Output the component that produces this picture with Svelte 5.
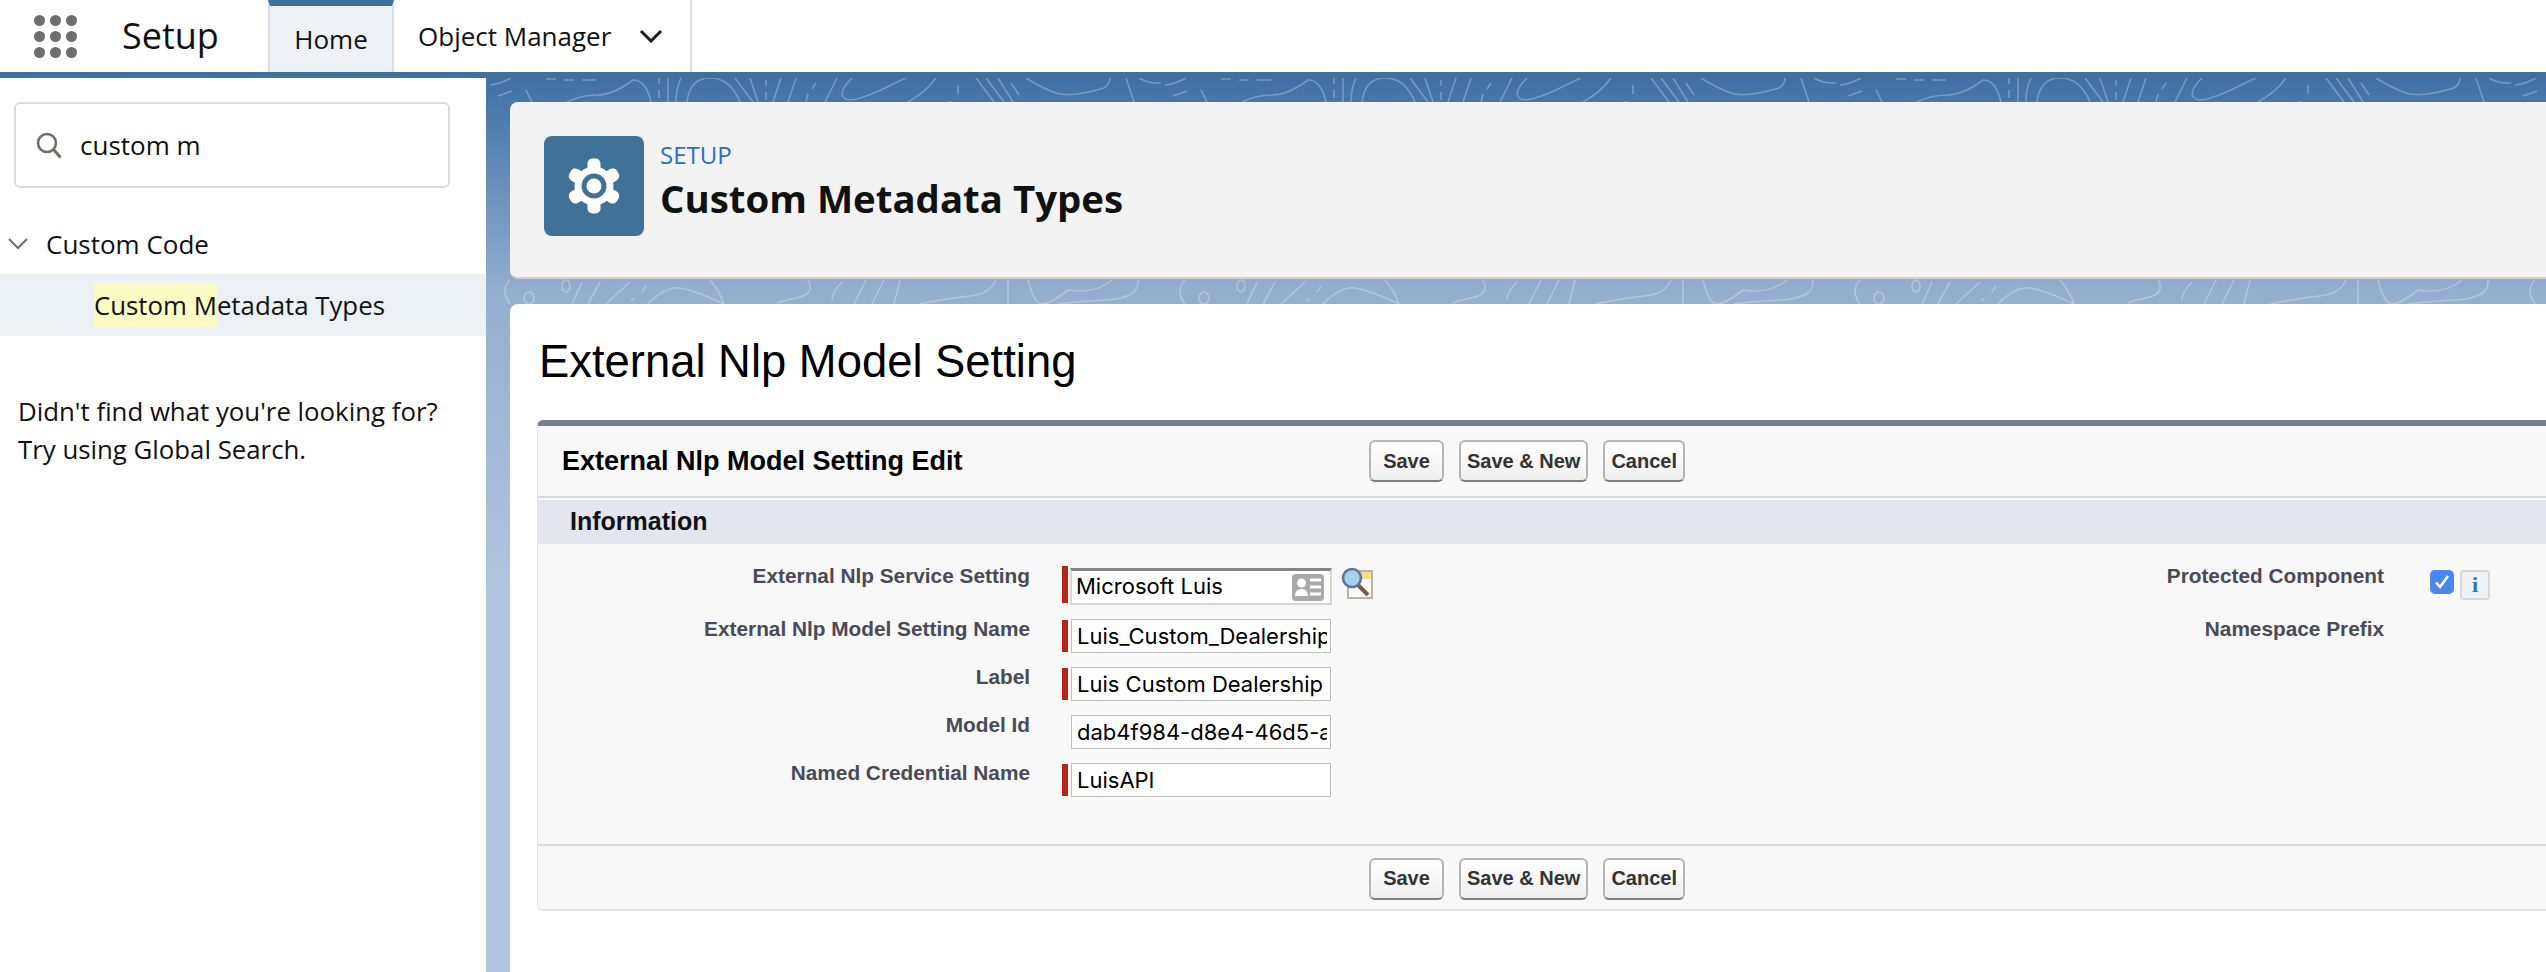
<script>
  const required = true;
  const fieldsLeft = [
    { label: 'External Nlp Service Setting', value: 'Microsoft Luis', required, lookup: true },
    { label: 'External Nlp Model Setting Name', value: 'Luis_Custom_Dealership', required },
    { label: 'Label', value: 'Luis Custom Dealership', required },
    { label: 'Model Id', value: 'dab4f984-d8e4-46d5-a' },
    { label: 'Named Credential Name', value: 'LuisAPI', required },
  ];
  const buttons = ['Save', 'Save & New', 'Cancel'];
  const teeth = [0, 60, 120, 180, 240, 300];
</script>

{#snippet actions()}
  <div class="actions">
    {#each buttons as b}
      <button class="btn" type="button">{b}</button>
    {/each}
  </div>
{/snippet}

<div class="page">
  <!-- Top nav -->
  <header class="nav">
    <div class="waffle">
      {#each Array(9) as _}
        <span class="dot"></span>
      {/each}
    </div>
    <span class="app-name">Setup</span>
    <div class="tab tab-active">Home</div>
    <div class="tab tab-om">
      Object Manager
      <svg width="24" height="14" viewBox="0 0 24 14"><path d="M2 2l10 10L22 2" fill="none" stroke="#1c1c1c" stroke-width="3"/></svg>
    </div>
  </header>

  <div class="body">
    <!-- Sidebar -->
    <aside class="sidebar">
      <div class="search">
        <svg width="26" height="27" viewBox="0 0 26 27"><circle cx="11" cy="11" r="9" fill="none" stroke="#706e6b" stroke-width="2.6"/><path d="M17.5 17.5l7 8" stroke="#706e6b" stroke-width="3.2"/></svg>
        <span>custom m</span>
      </div>
      <div class="tree-head">
        <svg width="20" height="12" viewBox="0 0 20 12"><path d="M1 1l9 9 9-9" fill="none" stroke="#706e6b" stroke-width="2"/></svg>
        <span>Custom Code</span>
      </div>
      <div class="tree-item"><mark>Custom M</mark>etadata Types</div>
      <p class="hint">Didn't find what you're looking for?<br />Try using Global Search.</p>
    </aside>

    <!-- Main -->
    <main class="main">
      <svg class="topo" width="2060" height="240" aria-hidden="true">
        <defs>
          <pattern id="topo" width="675" height="240" patternUnits="userSpaceOnUse">
            <g fill="none" stroke="#fff" stroke-opacity=".27" stroke-width="1.6">
              <path d="M4 7Q14 6 25 0" />
              <path d="M60 1h10M78 2h10M96 2h14" />
              <path d="M12 18l14-5M40 12l6 12" />
              <path d="M81 24Q95 17 111 17T147 2Q160 2 165 24" />
              <path d="M173 0v6M173 12v8M182 0v24M195 0Q190 10 190 24" />
              <path d="M201 24Q204 0 224 0T254 24" />
              <path d="M249 0l18 24M264 0l8 24M280 2v6M280 14v8M295 0l-8 24M310 0l-8 24M330 5l-4 6M322 16l-2 8M351 0l-12 24" />
              <path d="M366 0Q352 14 358 20T395 12Q413 3 420 0M450 0Q440 14 422 24" />
              <path d="M472 7v9M466 24l-4 0" />
              <path d="M490 0l18 24M500 0l18 24M512 0l15 24M525 5l8 12" />
              <path d="M540 0Q556 10 570 15T618 10Q624 6 624 0" />
              <path d="M640 0l8 24M653 0Q670 10 690 0" />
            </g>
            <g fill="none" stroke="#fff" stroke-opacity=".27" stroke-width="1.6">
              <path d="M24 202Q14 212 24 226" />
              <ellipse cx="43" cy="220" rx="5" ry="6" />
              <ellipse cx="80" cy="208" rx="4" ry="6" />
              <path d="M96 204l-10 22M114 204l-12 22M144 204l-24 22" />
              <path d="M160 208l-4 6M148 220l-3 3" />
              <path d="M162 226Q180 208 194 210T238 226M224 202Q234 214 238 226" />
              <path d="M322 202Q330 216 310 220T292 226" />
              <path d="M356 204Q346 214 346 222M380 202l-12 24M398 202l-12 24M414 202l-6 24" />
              <path d="M434 226Q464 220 484 218T510 202M522 202v24" />
              <path d="M542 202Q548 226 556 226T582 212Q610 216 626 202" />
              <path d="M652 202Q654 220 620 222T572 226" />
            </g>
          </pattern>
        </defs>
        <rect width="2060" height="240" fill="url(#topo)" />
      </svg>

      <section class="page-head">
        <div class="head-icon">
          <svg width="56" height="56" viewBox="-28 -28 56 56">
            {#each teeth as t}
              <rect x="-6.5" y="-27.5" width="13" height="16" rx="5" fill="#fff" transform="rotate({t})" />
            {/each}
            <circle r="19.5" fill="#fff" />
            <circle r="12.5" fill="#3f7199" />
            <circle r="7.5" fill="#fff" />
          </svg>
        </div>
        <div>
          <div class="eyebrow">SETUP</div>
          <h1 class="head-title">Custom Metadata Types</h1>
        </div>
      </section>

      <section class="card">
        <h2 class="record-title">External Nlp Model Setting</h2>

        <div class="panel">
          <div class="panel-head">
            <h3 class="panel-title">External Nlp Model Setting Edit</h3>
            {@render actions()}
          </div>
          <div class="band">Information</div>
          <div class="form">
            {#each fieldsLeft as f, i}
              <div class="lbl">{f.label}</div>
              <div class="field">
                <span class="req" class:on={f.required} class:tall={f.lookup}></span>
                {#if f.lookup}
                  <div class="input input-lookup">
                    <span class="lookup-value">{f.value}</span>
                    <svg width="32" height="27" viewBox="0 0 32 27"><rect width="32" height="27" rx="4" fill="#a9a9a9"/><circle cx="9.5" cy="9" r="4.5" fill="#fff"/><path d="M3 22q0-7 6.5-7t6.500 7z" fill="#fff"/><path d="M18 6h11M18 13h11M18 20h11" stroke="#fff" stroke-width="3"/></svg>
                  </div>
                  <svg class="lens" width="33" height="32" viewBox="0 0 33 32">
                    <rect x="7" y="4" width="24" height="27" fill="#fff" stroke="#b5b5ad" stroke-width="2"/>
                    <rect x="18" y="5" width="12" height="7" fill="#fbdc8a"/>
                    <path d="M16 17l11 11" stroke="#7b5a40" stroke-width="4"/>
                    <circle cx="11" cy="11" r="9" fill="#a9d0ee" stroke="#587a94" stroke-width="2.6"/>
                  </svg>
                {:else}
                  <div class="input"><span class="clip">{f.value}</span></div>
                {/if}
              </div>
              {#if i === 0}
                <div class="lbl">Protected Component</div>
                <div class="check-cell">
                  <span class="check">
                    <svg width="18" height="16" viewBox="0 0 18 16"><path d="M3 8.500l4 4.500 8-11" fill="none" stroke="#fff" stroke-width="2.600"/></svg>
                  </span>
                  <span class="info">i</span>
                </div>
              {:else if i === 1}
                <div class="lbl">Namespace Prefix</div>
                <div></div>
              {:else}
                <div></div>
                <div></div>
              {/if}
            {/each}
          </div>
          <div class="panel-foot">
            {@render actions()}
          </div>
        </div>
      </section>
    </main>
  </div>
</div>

<style>
  :global(body) { margin: 0; background: #fff; overflow: hidden; }

  .page {
    width: 2546px;
    height: 972px;
    overflow: hidden;
    display: flex;
    flex-direction: column;
    font-family: 'Open Sans', 'Noto Sans', sans-serif;
    color: #111;
  }

  /* Nav */
  .nav {
    height: 72px;
    flex-shrink: 0;
    display: flex;
    background: #fff;
    border-bottom: 6px solid #3f7199;
  }
  .waffle {
    display: grid;
    grid-template-columns: repeat(3, 11px);
    gap: 5px;
    align-content: center;
    margin-left: 34px;
    width: 43px;
  }
  .dot { width: 11px; height: 11px; border-radius: 50%; background: #706e6b; }
  .app-name {
    margin-left: 45px;
    width: 146px;
    font-size: 36px;
    line-height: 72px;
    color: #111;
  }
  .tab {
    display: flex;
    align-items: center;
    font-size: 26px;
    box-sizing: border-box;
  }
  .tab-active {
    width: 126px;
    justify-content: center;
    background: #eef1f6;
    border: solid #d8dde6;
    border-width: 0 2px;
    border-top: 6px solid #3f7199;
  }
  .tab-om {
    width: 298px;
    padding-left: 24px;
    gap: 28px;
    border-right: 2px solid #d8dde6;
  }

  .body { flex: 1; display: flex; min-height: 0; }

  /* Sidebar */
  .sidebar {
    width: 486px;
    flex-shrink: 0;
    background: #fff;
    padding-top: 24px;
    box-sizing: border-box;
  }
  .search {
    margin: 0 36px 0 14px;
    height: 86px;
    box-sizing: border-box;
    border: 2px solid #dddbda;
    border-radius: 6px;
    display: flex;
    align-items: center;
    gap: 18px;
    padding-left: 20px;
    font-size: 26px;
  }
  .tree-head {
    margin-top: 26px;
    height: 60px;
    display: flex;
    align-items: center;
    gap: 18px;
    padding-left: 8px;
    font-size: 26px;
  }
  .tree-item {
    height: 62px;
    background: #ecf1f6;
    padding-left: 94px;
    font-size: 25.8px;
    line-height: 62px;
  }
  mark { background: #fbfcc4; color: inherit; padding: 4px 0; }
  .hint {
    margin: 56px 0 0 18px;
    font-size: 25.8px;
    line-height: 38px;
  }

  /* Main */
  .main {
    flex: 1;
    min-width: 0;
    position: relative;
    padding: 24px 0 0 24px;
    display: flex;
    flex-direction: column;
    gap: 25px;
    background: linear-gradient(#3f70a5 0, #93aecf 212px, #b2c5e0 520px);
  }
  .topo { position: absolute; left: 0; top: 0; }

  .page-head {
    position: relative;
    height: 177px;
    box-sizing: border-box;
    display: flex;
    gap: 16px;
    padding: 34px 0 0 34px;
    background: #f3f3f3;
    border-radius: 8px 0 0 8px;
    border-bottom: 2px solid #cfcfcf;
  }
  .head-icon {
    width: 100px;
    height: 100px;
    border-radius: 8px;
    background: #3f7199;
    display: flex;
    align-items: center;
    justify-content: center;
  }
  .eyebrow {
    font-size: 24px;
    line-height: 38px;
    color: #2a6ccb;
  }
  .head-title {
    margin: 0;
    font-size: 38.4px;
    line-height: 48px;
    font-weight: 700;
  }

  .card {
    position: relative;
    flex: 1;
    background: #fff;
    border-radius: 8px 0 0 0;
    padding: 31px 0 0 27px;
    font-family: 'Liberation Sans', Arial, sans-serif;
  }
  .record-title {
    margin: 0 0 31px 2px;
    font-size: 45.4px;
    line-height: 54px;
    font-weight: 400;
    color: #000;
  }

  .panel {
    background: #f8f8f8;
    border-top: 6px solid #767e93;
    border-left: 1px solid #e4e4e4;
    border-bottom: 2px solid #e4e4e4;
    border-radius: 6px 0 0 6px;
  }
  .panel-head {
    height: 70px;
    display: flex;
    align-items: center;
    padding-left: 24px;
    border-bottom: 2px solid #dcd9d9;
    margin-bottom: 2px;
  }
  .panel-title {
    margin: 0;
    width: 807px;
    font-size: 27px;
    font-weight: 700;
    color: #000;
  }
  .band {
    height: 44px;
    background: #e3e6ef;
    padding-left: 32px;
    font-size: 25px;
    font-weight: 700;
    line-height: 43px;
    color: #111;
  }

  .form {
    display: grid;
    grid-template-columns: 492px 690px 600px 1fr;
    grid-template-rows: 39px 34px 34px 34px 34px;
    column-gap: 32px;
    row-gap: 14px;
    padding: 22px 0 47px;
  }
  .lbl {
    text-align: right;
    font-size: 20.8px;
    font-weight: 700;
    line-height: 20px;
    color: #4a4a56;
  }
  .field { display: flex; align-items: flex-start; }
  .req { width: 6px; height: 32px; margin-top: 1px; margin-right: 3px; flex-shrink: 0; }
  .req.tall { height: 37px; margin-top: 0; }
  .req.on { background: #b7241a; }
  .input {
    width: 260px;
    height: 34px;
    box-sizing: border-box;
    background: #fff;
    border: 1px solid #bdbdbd;
    padding: 0 3px 0 5px;
    font-family: Inter, 'Liberation Sans', sans-serif;
    font-size: 22px;
    line-height: 33px;
    color: #000;
    white-space: nowrap;
  }
  .clip { display: block; overflow: hidden; }
  .input-lookup {
    width: 262px;
    height: 37px;
    margin-top: 2px;
    border: 2px solid #d6d6d6;
    border-top: 3px solid #848484;
    display: flex;
    align-items: center;
    justify-content: space-between;
    padding: 0 6px 0 4px;
    margin-left: -1px;
  }
  .lookup-value { margin-bottom: 2px; }
  .lens { margin-left: 9px; margin-top: 1px; }
  .check-cell { display: flex; align-items: flex-start; gap: 6px; padding: 4px 0 0 14px; }
  .check {
    width: 24px;
    height: 24px;
    border-radius: 5px;
    background: #4a86f0;
    display: flex;
    align-items: center;
    justify-content: center;
  }
  .info {
    width: 30px;
    height: 30px;
    box-sizing: border-box;
    border: 2px solid #d8d8d8;
    border-radius: 4px;
    background: #eef3f9;
    color: #2d72c4;
    font-family: 'Liberation Serif', serif;
    font-weight: 700;
    font-size: 22px;
    line-height: 26px;
    text-align: center;
  }

  .panel-foot {
    height: 65px;
    box-sizing: border-box;
    padding: 2px 0 0 831px;
    border-top: 2px solid #dcdcdc;
    display: flex;
    align-items: center;
  }

  .actions { display: flex; gap: 15px; }
  .btn {
    height: 42px;
    min-width: 75px;
    padding: 0 6px;
    margin: 0;
    box-sizing: border-box;
    border: 2px solid #b5b5b5;
    border-bottom-color: #7f7f7f;
    border-radius: 6px;
    background: linear-gradient(#fff, #efefef);
    font-family: 'Liberation Sans', Arial, sans-serif;
    font-size: 20px;
    font-weight: 700;
    color: #333;
  }
</style>
